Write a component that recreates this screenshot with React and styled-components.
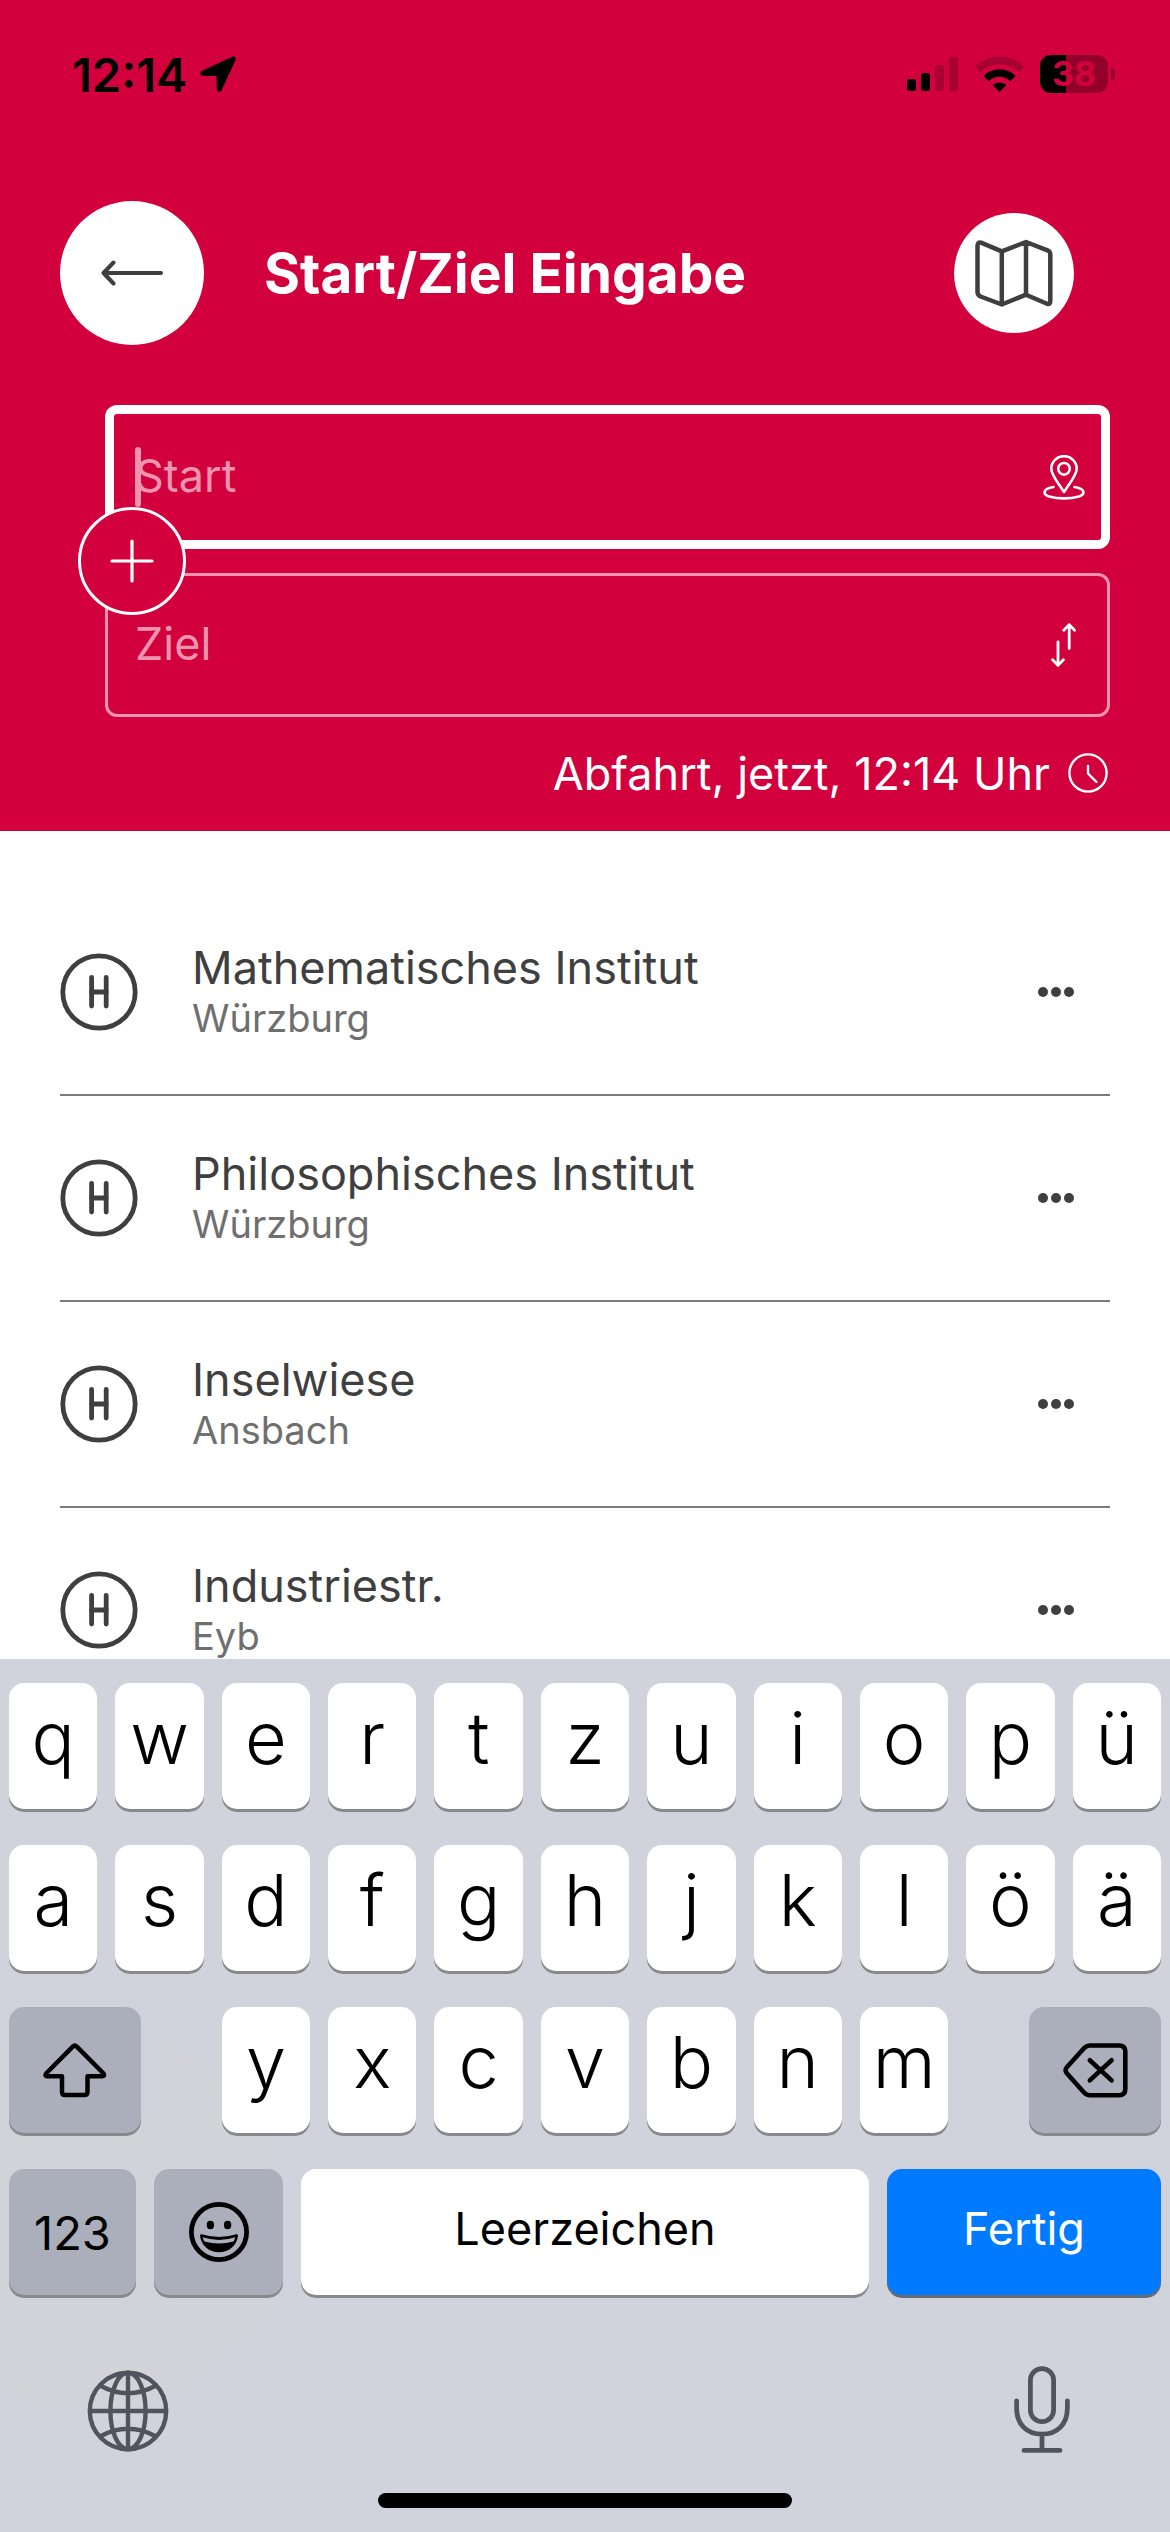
import React, { useState } from 'react'
import styled, { createGlobalStyle } from 'styled-components';

const GlobalStyle = createGlobalStyle`
    * {
        box-sizing: border-box;
    }

    body {
        margin: 0;
        background: #fff;
        font-family: Inter, Roboto, "Liberation Sans", sans-serif;
    }

    button {
        padding: 0;
        border: none;
        background: none;
        color: inherit;
        font: inherit;
        cursor: pointer;
    }

    svg {
        display: block;
        flex: none;
    }
`

const Screen = styled.div`
    display: flex;
    flex-direction: column;
    height: 100vh;
    overflow: hidden;
`

/* ---------- red header ---------- */

const Header = styled.header`
    background: #d2003c;
    color: #fff;
    padding-bottom: 28px;
`

const StatusBar = styled.div`
    display: flex;
    align-items: center;
    justify-content: space-between;
    height: 148px;
    padding: 0 55px 0 72px;
    color: #000;
`

const StatusGroup = styled.div`
    display: flex;
    align-items: center;
    gap: ${props => props.$gap}px;
`

const Time = styled.span`
    font-size: 47px;
    font-weight: 600;
`

const Battery = styled.div`
    position: relative;
    display: flex;
    align-items: center;
    justify-content: center;
    width: 68px;
    height: 38px;
    margin-right: 7px;
    border-radius: 11px;
    background: linear-gradient(to right, #000 38%, #93002a 38%);
    color: #d2003c;
    font-size: 34px;
    font-weight: 700;
    line-height: 38px;

    &::after {
        content: '';
        position: absolute;
        right: -7px;
        top: 13px;
        width: 4px;
        height: 12px;
        border-radius: 0 4px 4px 0;
        background: #93002a;
    }
`

const NavBar = styled.div`
    display: flex;
    align-items: center;
    padding: 53px 96px 60px 60px;
`

const RoundButton = styled.button`
    display: flex;
    align-items: center;
    justify-content: center;
    width: ${props => props.$size}px;
    height: ${props => props.$size}px;
    border-radius: 50%;
    background: #fff;
    color: #3f3f3f;
`

const Title = styled.h1`
    flex: 1;
    margin: 0 0 0 60px;
    font-size: 55px;
    font-weight: 650;
    line-height: 64px;
`

const Fields = styled.div`
    position: relative;
    display: flex;
    flex-direction: column;
    gap: 24px;
    margin: 0 60px 0 105px;
`

const Field = styled.div`
    position: relative;
    display: flex;
    align-items: center;
    height: 144px;
    padding: 0 16px 0 30px;
    border-radius: 12px;
    box-shadow: inset 0 0 0 ${props => (props.$active ? '9px #fff' : '3px #ee94ae')};
`

const Input = styled.input`
    flex: 1;
    min-width: 0;
    padding: 0 0 2px;
    border: none;
    outline: none;
    background: transparent;
    color: #fff;
    font-family: inherit;
    font-size: 45px;
    line-height: 60px;

    &::placeholder {
        color: #ee94ae;
        opacity: 1;
    }
`

const Caret = styled.span`
    position: absolute;
    left: 30px;
    top: 42px;
    width: 6px;
    height: 60px;
    border-radius: 3px;
    background: #ee94ae;
`

const FieldButton = styled.button`
    display: flex;
    align-items: center;
    justify-content: center;
    width: 60px;
    height: 60px;
`

const AddButton = styled.button`
    position: absolute;
    left: -27px;
    top: calc(50% - 54px);
    display: flex;
    align-items: center;
    justify-content: center;
    width: 108px;
    height: 108px;
    border: 3px solid #fff;
    border-radius: 50%;
    background: #d2003c;
`

const Departure = styled.button`
    display: flex;
    align-items: center;
    gap: 18px;
    height: 60px;
    margin: 26px 62px 0 auto;
    font-size: 45px;
`

/* ---------- stop list ---------- */

const StopList = styled.ul`
    flex: 1;
    min-height: 0;
    overflow: hidden;
    margin: 0;
    padding: 59px 60px 0;
    list-style: none;
`

const StopRow = styled.li`
    display: flex;
    align-items: center;
    height: 206px;
    padding-right: 36px;
    border-bottom: 2px solid #7a7a7a;
    color: #3f3f3f;
`

const StopText = styled.div`
    flex: 1;
    margin-left: 54px;
`

const StopName = styled.div`
    font-size: 45px;
    line-height: 52px;
`

const StopTown = styled.div`
    color: #6f6f6f;
    font-size: 38px;
    line-height: 48px;
`

/* ---------- keyboard ---------- */

const Keyboard = styled.div`
    display: flex;
    flex-direction: column;
    gap: 36px;
    padding: 24px 9px;
    background: radial-gradient(circle 200px at 90px 560px, #d2d3d8 90%, transparent) #d0d3dc;
`

const KeyRow = styled.div`
    display: grid;
    grid-template-columns: ${props => props.$columns || 'repeat(11, 1fr)'};
    gap: 18px;
`

const Key = styled.button`
    display: flex;
    align-items: center;
    justify-content: center;
    height: 126px;
    border-radius: 15px;
    background: #fff;
    box-shadow: 0 3px 0 #88898d;
    color: #000;
`

const LetterKey = styled(Key)`
    padding-bottom: 18px;
    font-size: 72px;
    font-weight: 350;
`

const WordKey = styled(Key)`
    padding-bottom: 8px;
    font-size: 45px;
`

const GreyKey = styled(Key)`
    background: #aaafbb;
    font-size: 47px;
`

const SideKey = styled(GreyKey)`
    grid-column: span 2;
    justify-self: ${props => props.$side};
    width: 132px;
`

const DoneKey = styled(WordKey)`
    background: #007aff;
    box-shadow: 0 3px 0 #686b72;
    color: #fff;
`

const Tools = styled.div`
    display: flex;
    justify-content: space-between;
    margin-top: 34px;
    padding: 0 73px;
    color: #50555d;
`

const ToolButton = styled.button`
    display: flex;
    align-items: center;
    justify-content: center;
    width: 92px;
    height: 92px;
`

const HomeBar = styled.div`
    align-self: center;
    width: 36%;
    height: 15px;
    border-radius: 8px;
    background: #000;
`

/* ---------- icons ---------- */

const Icon = ({ w, h, sw, children }) => (
    <svg width={w} height={h} viewBox={`0 0 ${w} ${h}`} fill="none" stroke="currentColor"
        strokeWidth={sw} strokeLinecap="round" strokeLinejoin="round" aria-hidden="true">
        {children}
    </svg>
)

const LocationIcon = () => (
    <Icon w={36} h={36} sw={5}>
        <path d="M33.3 3 2.8 17.2 19 17.6 19.3 33.2Z" fill="currentColor" />
    </Icon>
)

const SignalIcon = () => (
    <svg width="52" height="34" viewBox="0 0 52 34" aria-hidden="true">
        <rect x="0" y="22" width="9" height="12" rx="3" />
        <rect x="14" y="16" width="9" height="18" rx="3" />
        <rect x="28" y="8" width="9" height="26" rx="3" fill="#a80030" />
        <rect x="42" y="0" width="9" height="34" rx="3" fill="#a80030" />
    </svg>
)

const WifiIcon = () => (
    <svg width="49" height="36" viewBox="0 0 49 36" fill="none" strokeWidth="7.5" aria-hidden="true">
        <path d="M2.2 13.7A31.5 31.5 0 0 1 46.8 13.7" stroke="#a80030" />
        <path d="M11.1 22.6A19 19 0 0 1 37.9 22.6" stroke="#000" />
        <path d="M24.5 36 17.6 29.1A10.5 10.5 0 0 1 31.4 29.1Z" fill="#000" />
    </svg>
)

const BackIcon = () => (
    <Icon w={62} h={26} sw={4}>
        <path d="M3 13H60M12.5 2.5 2.5 13 12.5 23.5" />
    </Icon>
)

const MapIcon = () => (
    <Icon w={78} h={68} sw={4.5}>
        <path d="M26.8 12.3 6 3.6Q2.5 2.8 2.5 7V53Q2.5 56 5.5 57.5L26.8 65.5 51 55.7 72 64.8Q75.3 65.8 75.3 62V15.5Q75.3 12.5 72.5 11.3L51 3ZM26.8 12.3V65.5M51 3V55.7" />
    </Icon>
)

const PinIcon = () => (
    <Icon w={42} h={45} sw={2.6}>
        <path d="M21 37C15 28 8.3 20 8.3 13.8A12.7 12.7 0 0 1 33.7 13.8C33.7 20 27 28 21 37Z" />
        <circle cx="21" cy="13.8" r="5.8" />
        <path d="M10.5 32C4.8 33 1.5 35 1.5 37.4 1.5 41 10 43.4 21 43.4S40.5 41 40.5 37.4C40.5 35 37.2 33 31.5 32" />
    </Icon>
)

const SwapIcon = () => (
    <Icon w={26} h={44} sw={2.8}>
        <path d="M7 19V42M1.6 36.8 7 42.4 12.4 36.8" />
        <path d="M18.2 25.5V2M12.8 7.2 18.2 1.6 23.6 7.2" />
    </Icon>
)

const PlusIcon = () => (
    <Icon w={44} h={44} sw={3.2}>
        <path d="M2 22H42M22 2V42" />
    </Icon>
)

const ClockIcon = () => (
    <Icon w={40} h={40} sw={2.4}>
        <circle cx="20" cy="20" r="18.6" />
        <path d="M20 13V20.5L28.5 29" />
    </Icon>
)

const StopIcon = () => (
    <Icon w={78} h={78} sw={4.8}>
        <circle cx="39" cy="39" r="36.2" />
        <line x1="31.6" y1="24.5" x2="31.6" y2="53" />
        <line x1="46.2" y1="24.5" x2="46.2" y2="53" />
        <line x1="31.6" y1="39" x2="46.2" y2="39" />
    </Icon>
)

const DotsIcon = () => (
    <svg width="36" height="10" viewBox="0 0 36 10" fill="currentColor" aria-hidden="true">
        <circle cx="5" cy="5" r="5" />
        <circle cx="18" cy="5" r="5" />
        <circle cx="31" cy="5" r="5" />
    </svg>
)

const ShiftIcon = () => (
    <Icon w={64} h={55} sw={4.5}>
        <path d="M29.8 3.6Q31.8 1.6 33.8 3.6L60 30Q62.5 33.2 59 33.2H44.5V49Q44.5 52 41.5 52H22Q19 52 19 49V33.2H4.5Q1 33.2 3.6 30Z" />
    </Icon>
)

const BackspaceIcon = () => (
    <Icon w={65} h={55} sw={4.6}>
        <path d="M27 2.5H56Q62.3 2.5 62.3 8.5V46Q62.3 52.2 56 52.2H27Q23.5 52.2 21 49.5L3.6 30Q1.6 27.2 3.6 24.5L21 5.3Q23.5 2.5 27 2.5Z" />
        <path d="M26.8 17.2 48.6 37.4M48.6 17.2 26.8 37.4" />
    </Icon>
)

const SmileyIcon = () => (
    <svg width="60" height="60" viewBox="0 0 60 60" aria-hidden="true">
        <circle cx="30" cy="30" r="27.6" fill="none" stroke="#000" strokeWidth="4.8" />
        <ellipse cx="21.4" cy="23" rx="3.7" ry="4.2" />
        <ellipse cx="38.6" cy="23" rx="3.7" ry="4.2" />
        <path d="M12.8 32.2Q30 37.6 47.2 32.2 49.3 31.8 49 34C47.5 44 40 50.2 30 50.2S12.5 44 11 34Q10.7 31.8 12.8 32.2Z" />
        <path d="M13.8 35.2Q30 40.6 46.2 35.2 45.8 37.6 44.4 39.6 30 43.4 15.6 39.6 14.2 37.6 13.8 35.2Z" fill="#aaafbb" />
    </svg>
)

const GlobeIcon = () => (
    <Icon w={82} h={82} sw={4.4}>
        <circle cx="41" cy="41" r="38.2" />
        <ellipse cx="41" cy="41" rx="17.6" ry="38.2" />
        <path d="M41 3V79M3 41H79M13 15.5Q41 31 69 15.5M13 66.5Q41 51 69 66.5" />
    </Icon>
)

const MicIcon = () => (
    <Icon w={56} h={90} sw={4.8}>
        <rect x="16.4" y="2.6" width="23.2" height="53" rx="11.6" />
        <path d="M2.6 35V42C2.6 58 12.5 68.2 28 68.2S53.4 58 53.4 42V35M28 68.2V84M10 84.4H46" />
    </Icon>
)

const stops = [
    { name: 'Mathematisches Institut', town: 'Würzburg' },
    { name: 'Philosophisches Institut', town: 'Würzburg' },
    { name: 'Inselwiese', town: 'Ansbach' },
    { name: 'Industriestr.', town: 'Eyb' },
]

const letters = text => [...text].map(letter => (
    <LetterKey type="button" key={letter}>{letter}</LetterKey>
))

function App() {
    const [start, setStart] = useState('')
    const [ziel, setZiel] = useState('')

    const swap = () => {
        setStart(ziel)
        setZiel(start)
    }

    return (
        <Screen>
            <GlobalStyle />
            <Header>
                <StatusBar>
                    <StatusGroup $gap={13}>
                        <Time>12:14</Time>
                        <LocationIcon />
                    </StatusGroup>
                    <StatusGroup $gap={16}>
                        <SignalIcon />
                        <WifiIcon />
                        <Battery>38</Battery>
                    </StatusGroup>
                </StatusBar>
                <NavBar>
                    <RoundButton type="button" $size={144} aria-label="Zurück"><BackIcon /></RoundButton>
                    <Title>Start/Ziel Eingabe</Title>
                    <RoundButton type="button" $size={120} aria-label="Karte"><MapIcon /></RoundButton>
                </NavBar>
                <Fields>
                    <Field $active>
                        {!start && <Caret />}
                        <Input aria-label="Start" placeholder="Start" value={start}
                            onChange={e => setStart(e.target.value)} />
                        <FieldButton type="button" aria-label="Aktueller Standort"><PinIcon /></FieldButton>
                    </Field>
                    <Field>
                        <Input aria-label="Ziel" placeholder="Ziel" value={ziel}
                            onChange={e => setZiel(e.target.value)} />
                        <FieldButton type="button" aria-label="Tauschen" onClick={swap}><SwapIcon /></FieldButton>
                    </Field>
                    <AddButton type="button" aria-label="Zwischenhalt hinzufügen"><PlusIcon /></AddButton>
                </Fields>
                <Departure type="button">
                    Abfahrt, jetzt, 12:14 Uhr
                    <ClockIcon />
                </Departure>
            </Header>
            <StopList>
                {stops.map(stop => (
                    <StopRow key={stop.name}>
                        <StopIcon />
                        <StopText>
                            <StopName>{stop.name}</StopName>
                            <StopTown>{stop.town}</StopTown>
                        </StopText>
                        <button type="button" aria-label={`Mehr zu ${stop.name}`}><DotsIcon /></button>
                    </StopRow>
                ))}
            </StopList>
            <Keyboard>
                <KeyRow>{letters('qwertzuiopü')}</KeyRow>
                <KeyRow>{letters('asdfghjklöä')}</KeyRow>
                <KeyRow>
                    <SideKey type="button" $side="start" aria-label="Umschalt"><ShiftIcon /></SideKey>
                    {letters('yxcvbnm')}
                    <SideKey type="button" $side="end" aria-label="Löschen"><BackspaceIcon /></SideKey>
                </KeyRow>
                <KeyRow $columns="127fr 129fr 568fr 274fr">
                    <GreyKey type="button">123</GreyKey>
                    <GreyKey type="button" aria-label="Emoji"><SmileyIcon /></GreyKey>
                    <WordKey type="button">Leerzeichen</WordKey>
                    <DoneKey type="button">Fertig</DoneKey>
                </KeyRow>
                <Tools>
                    <ToolButton type="button" aria-label="Sprache"><GlobeIcon /></ToolButton>
                    <ToolButton type="button" aria-label="Diktieren"><MicIcon /></ToolButton>
                </Tools>
                <HomeBar />
            </Keyboard>
        </Screen>
    )
}

export default App;
